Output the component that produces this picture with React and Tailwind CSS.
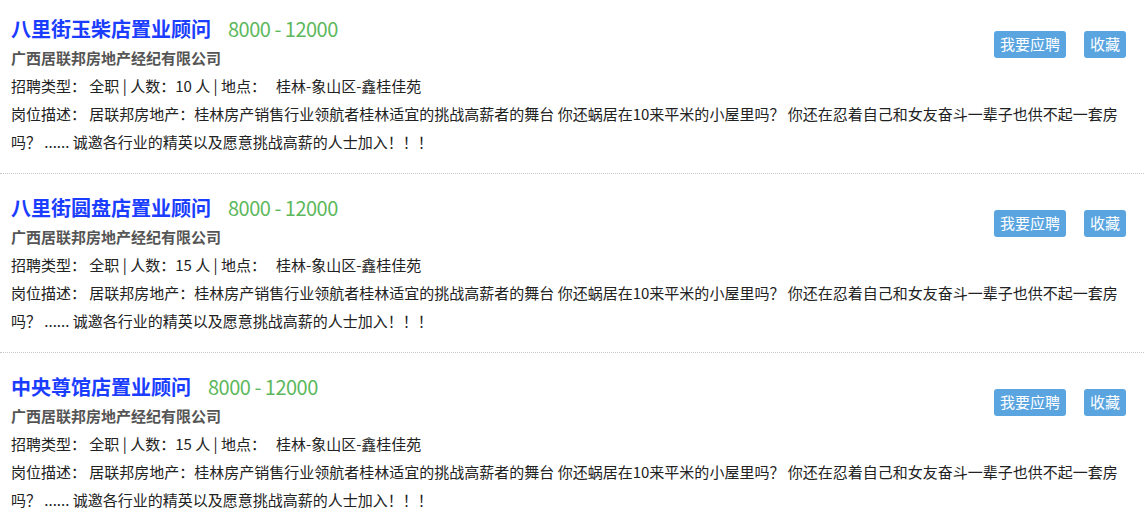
import React from 'react';

const jobs = [
    { title: "八里街玉柴店置业顾问", count: 10 },
    { title: "八里街圆盘店置业顾问", count: 15 },
    { title: "中央尊馆店置业顾问", count: 15 },
];

const desc = "居联邦房地产：桂林房产销售行业领航者桂林适宜的挑战高薪者的舞台 你还蜗居在10来平米的小屋里吗？ 你还在忍着自己和女友奋斗一辈子也供不起一套房吗？ ...... 诚邀各行业的精英以及愿意挑战高薪的人士加入！！！";

function JobItem({ job }) {
    return (
        <div className="pt-[19px] pb-[17px] pl-[11px] pr-[10px] border-b border-dotted border-[#c8c8c8]">
            <div className="flex justify-between items-start">
                <div>
                    <div className="flex items-center h-[30px]">
                        <a href="#" className="text-[20px] font-bold text-[#1a3dff]">{job.title}</a>
                        <span className="ml-[17px] text-[20px] tracking-[-0.5px] text-[#5cb85c]">8000 - 12000</span>
                    </div>
                    <div className="h-[28px] leading-[28px] text-[15px] font-bold text-[#555]">广西居联邦房地产经纪有限公司</div>
                </div>
                <div className="flex gap-[18px] mt-[17px] mr-[8px]">
                    <button className="h-[27px] px-[6px] rounded-[3px] bg-[#5aa5e0] text-white text-[15px]">我要应聘</button>
                    <button className="h-[27px] px-[6px] rounded-[3px] bg-[#5aa5e0] text-white text-[15px]">收藏</button>
                </div>
            </div>
            <div className="text-[15px] leading-[28px] text-[#222]">
                <p>
                    {"招聘类型： 全职 | 人数：" + job.count + " 人 | 地点："}
                    <span className="ml-[10px]">桂林-象山区-鑫桂佳苑</span>
                </p>
                <p>{"岗位描述： " + desc}</p>
            </div>
        </div>
    );
}

export default function App() {
    return (
        <div className="bg-white min-h-screen overflow-hidden" style={{ fontFamily: '"Noto Sans CJK SC", "Noto Sans", sans-serif' }}>
            <div className="-mt-[5px]">
                {jobs.map((job, i) => (
                    <JobItem key={i} job={job} />
                ))}
            </div>
        </div>
    );
}
